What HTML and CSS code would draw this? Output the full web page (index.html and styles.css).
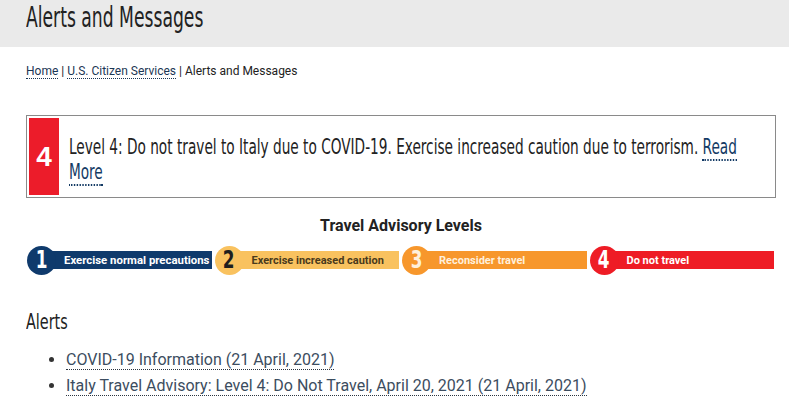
FILE: index.html
```html
<!DOCTYPE html>
<html>
<head>
<meta charset="utf-8">
<link rel="stylesheet" href="styles.css">
</head>
<body>
<header class="page-head">
  <h1 class="page-title">Alerts and Messages</h1>
</header>
<main class="content">
  <nav class="crumbs"><a href="#">Home</a> | <a href="#">U.S. Citizen Services</a> | Alerts and Messages</nav>

  <div class="alert-box">
    <div class="alert-level">4</div>
    <p class="alert-text">Level 4: Do not travel to Italy due to COVID-19. Exercise increased caution due to terrorism. <a href="#">Read More</a></p>
  </div>

  <h2 class="levels-title">Travel Advisory Levels</h2>
  <div class="levels">
    <div class="level l1"><span class="num"><span class="digit">1</span></span><span class="bar">Exercise normal precautions</span></div>
    <div class="level l2"><span class="num"><span class="digit">2</span></span><span class="bar">Exercise increased caution</span></div>
    <div class="level l3"><span class="num"><span class="digit">3</span></span><span class="bar">Reconsider travel</span></div>
    <div class="level l4"><span class="num"><span class="digit">4</span></span><span class="bar">Do not travel</span></div>
  </div>

  <h2 class="alerts-title">Alerts</h2>
  <ul class="alerts-list">
    <li><a href="#">COVID-19 Information (21 April, 2021)</a></li>
    <li><a href="#">Italy Travel Advisory: Level 4: Do Not Travel, April 20, 2021 (21 April, 2021)</a></li>
  </ul>
</main>
</body>
</html>
```
FILE: styles.css
```css
html, body { margin: 0; padding: 0; background: #fff; }
body { font-family: Roboto, "Liberation Sans", sans-serif; color: #222; }

.page-head { background: #eaeaea; height: 47px; padding: 0 26px; box-sizing: border-box; }
.page-title {
  display: inline-block;
  margin: 0; padding-top: 2px;
  font-family: "DejaVu Sans Condensed", "DejaVu Sans", sans-serif;
  font-stretch: condensed;
  font-weight: normal; font-size: 28px; line-height: 32px; color: #222;
  white-space: nowrap;
  transform: scaleX(0.682); transform-origin: 0 0;
}

.content { padding: 0 13px 0 26px; }

.crumbs { margin-top: 16px; font-size: 12px; line-height: 16px; color: #222; }
.crumbs a { color: #1b3654; text-decoration: none; border-bottom: 1px dotted #1b3654; }

.alert-box {
  margin-top: 36px;
  border: 1px solid #8a8a8a;
  padding: 2px;
  display: flex; align-items: stretch;
  overflow: hidden;
}
.alert-level {
  flex: none;
  width: 30px; background: #ec1c2a; color: #fff;
  font-family: "Liberation Sans", Arial, sans-serif; font-weight: bold; font-size: 28px;
  display: flex; align-items: center; justify-content: center;
}
.alert-text {
  flex: none;
  width: 975px;
  margin: 0; padding: 16px 0 11px 14px;
  font-family: "DejaVu Sans Condensed", "DejaVu Sans", sans-serif;
  font-stretch: condensed;
  font-size: 21.5px; line-height: 25px; color: #222;
  transform: scaleX(0.707); transform-origin: 0 0;
}
.alert-text a { color: #133a64; text-decoration: none; border-bottom: 2px dotted #133a64; }

.levels-title {
  margin: 18px 0 0; text-align: center;
  font-size: 16px; font-weight: bold; line-height: 20px; color: #222;
}
.levels { display: flex; gap: 3px; margin-top: 9px; padding-left: 1px; width: 747px; }
.level { flex: 1; display: flex; align-items: center; height: 30px; }
.level .num {
  width: 29px; height: 29px; border-radius: 50%;
  display: flex; align-items: center; justify-content: center;
  position: relative; z-index: 1; flex: none;
}
.level .digit {
  display: inline-block;
  font-family: "DejaVu Sans Condensed", "DejaVu Sans", sans-serif;
  font-stretch: condensed;
  font-weight: bold; font-size: 24px; line-height: 24px; color: #fff;
  transform: scaleX(0.78);
}
.level .bar {
  flex: 1; height: 18px; margin-left: -11px; padding-left: 19px;
  display: flex; align-items: center;
  font-size: 11px; font-weight: bold; color: #fff; white-space: nowrap;
}
.l1 .num, .l1 .bar { background: #0f3a6c; }
.l1 .bar { font-size: 11.4px; }
.l2 .num, .l2 .bar { background: #f9c25f; }
.l2 .digit { color: #1e1e1e; }
.l2 .bar { color: #4a3a1c; }
.l3 .num, .l3 .bar { background: #f7972c; }
.l3 .digit, .l3 .bar { color: #fff0dc; }
.l4 .num, .l4 .bar { background: #ee1c25; }

.alerts-title {
  display: inline-block;
  margin: 34px 0 0;
  font-family: "DejaVu Sans Condensed", "DejaVu Sans", sans-serif;
  font-stretch: condensed;
  font-weight: normal; font-size: 20.5px; line-height: 26px; color: #222;
  transform: scaleX(0.78); transform-origin: 0 0;
}
.alerts-list { margin: 12px 0 0; padding-left: 40px; font-size: 16px; line-height: 26px; }
.alerts-list li { color: #333; }
.alerts-list a { color: #3c4d60; text-decoration: none; border-bottom: 1px dotted #2a3440; }
```
